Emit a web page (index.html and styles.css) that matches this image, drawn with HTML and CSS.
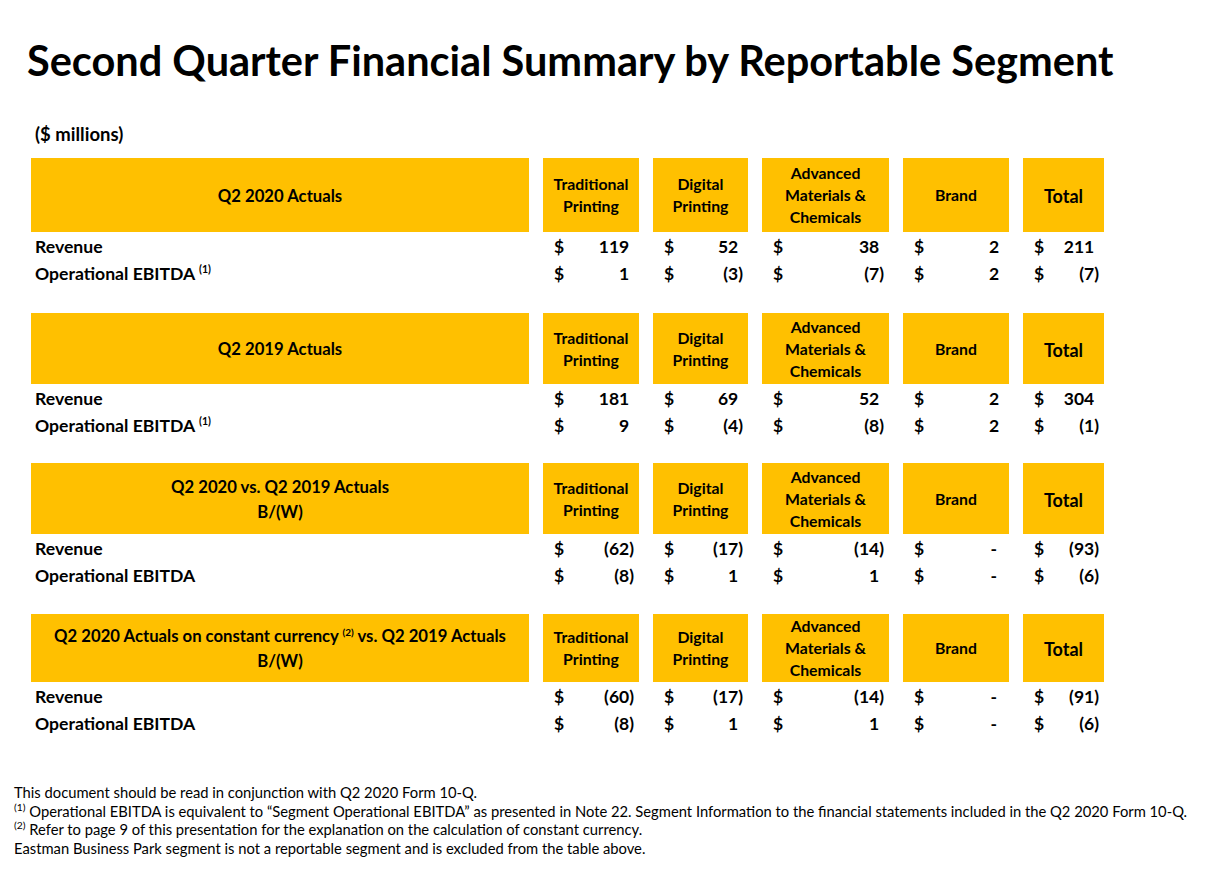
FILE: index.html
```html
<!DOCTYPE html>
<html lang="en">
<head>
<meta charset="utf-8">
<title>Second Quarter Financial Summary by Reportable Segment</title>
<link rel="stylesheet" href="styles.css">
</head>
<body>
<div class="slide">
  <h1 class="title">Second Quarter Financial Summary by Reportable Segment</h1>
  <div class="units">($ millions)</div>

  <section class="block b1">
    <div class="hd label"><span>Q2 2020 Actuals</span></div>
    <div class="hd"><span>Traditional<br>Printing</span></div>
    <div class="hd"><span>Digital<br>Printing</span></div>
    <div class="hd"><span>Advanced<br>Materials &amp;<br>Chemicals</span></div>
    <div class="hd"><span>Brand</span></div>
    <div class="hd total"><span>Total</span></div>

    <div class="rl">Revenue</div>
    <div class="val"><span>$</span><span class="pos">119</span></div>
    <div class="val"><span>$</span><span class="pos">52</span></div>
    <div class="val"><span>$</span><span class="pos">38</span></div>
    <div class="val"><span>$</span><span class="pos">2</span></div>
    <div class="val"><span>$</span><span class="pos">211</span></div>

    <div class="rl">Operational EBITDA <sup>(1)</sup></div>
    <div class="val"><span>$</span><span class="pos">1</span></div>
    <div class="val"><span>$</span><span>(3)</span></div>
    <div class="val"><span>$</span><span>(7)</span></div>
    <div class="val"><span>$</span><span class="pos">2</span></div>
    <div class="val"><span>$</span><span>(7)</span></div>
  </section>

  <section class="block b2">
    <div class="hd label"><span>Q2 2019 Actuals</span></div>
    <div class="hd"><span>Traditional<br>Printing</span></div>
    <div class="hd"><span>Digital<br>Printing</span></div>
    <div class="hd"><span>Advanced<br>Materials &amp;<br>Chemicals</span></div>
    <div class="hd"><span>Brand</span></div>
    <div class="hd total"><span>Total</span></div>

    <div class="rl">Revenue</div>
    <div class="val"><span>$</span><span class="pos">181</span></div>
    <div class="val"><span>$</span><span class="pos">69</span></div>
    <div class="val"><span>$</span><span class="pos">52</span></div>
    <div class="val"><span>$</span><span class="pos">2</span></div>
    <div class="val"><span>$</span><span class="pos">304</span></div>

    <div class="rl">Operational EBITDA <sup>(1)</sup></div>
    <div class="val"><span>$</span><span class="pos">9</span></div>
    <div class="val"><span>$</span><span>(4)</span></div>
    <div class="val"><span>$</span><span>(8)</span></div>
    <div class="val"><span>$</span><span class="pos">2</span></div>
    <div class="val"><span>$</span><span>(1)</span></div>
  </section>

  <section class="block b3">
    <div class="hd label"><span>Q2 2020 vs. Q2 2019 Actuals<br>B/(W)</span></div>
    <div class="hd"><span>Traditional<br>Printing</span></div>
    <div class="hd"><span>Digital<br>Printing</span></div>
    <div class="hd"><span>Advanced<br>Materials &amp;<br>Chemicals</span></div>
    <div class="hd"><span>Brand</span></div>
    <div class="hd total"><span>Total</span></div>

    <div class="rl">Revenue</div>
    <div class="val"><span>$</span><span>(62)</span></div>
    <div class="val"><span>$</span><span>(17)</span></div>
    <div class="val"><span>$</span><span>(14)</span></div>
    <div class="val"><span>$</span><span class="dash">-</span></div>
    <div class="val"><span>$</span><span>(93)</span></div>

    <div class="rl">Operational EBITDA</div>
    <div class="val"><span>$</span><span>(8)</span></div>
    <div class="val"><span>$</span><span class="pos">1</span></div>
    <div class="val"><span>$</span><span class="pos">1</span></div>
    <div class="val"><span>$</span><span class="dash">-</span></div>
    <div class="val"><span>$</span><span>(6)</span></div>
  </section>

  <section class="block b4">
    <div class="hd label"><span>Q2 2020 Actuals on constant currency <sup>(2)</sup> vs. Q2 2019 Actuals<br>B/(W)</span></div>
    <div class="hd"><span>Traditional<br>Printing</span></div>
    <div class="hd"><span>Digital<br>Printing</span></div>
    <div class="hd"><span>Advanced<br>Materials &amp;<br>Chemicals</span></div>
    <div class="hd"><span>Brand</span></div>
    <div class="hd total"><span>Total</span></div>

    <div class="rl">Revenue</div>
    <div class="val"><span>$</span><span>(60)</span></div>
    <div class="val"><span>$</span><span>(17)</span></div>
    <div class="val"><span>$</span><span>(14)</span></div>
    <div class="val"><span>$</span><span class="dash">-</span></div>
    <div class="val"><span>$</span><span>(91)</span></div>

    <div class="rl">Operational EBITDA</div>
    <div class="val"><span>$</span><span>(8)</span></div>
    <div class="val"><span>$</span><span class="pos">1</span></div>
    <div class="val"><span>$</span><span class="pos">1</span></div>
    <div class="val"><span>$</span><span class="dash">-</span></div>
    <div class="val"><span>$</span><span>(6)</span></div>
  </section>

  <div class="notes">
    <p>This document should be read in conjunction with Q2 2020 Form 10-Q.</p>
    <p><sup>(1)</sup> Operational EBITDA is equivalent to “Segment Operational EBITDA” as presented in Note 22. Segment Information to the financial statements included in the Q2 2020 Form 10-Q.</p>
    <p><sup>(2)</sup> Refer to page 9 of this presentation for the explanation on the calculation of constant currency.</p>
    <p>Eastman Business Park segment is not a reportable segment and is excluded from the table above.</p>
  </div>
</div>
</body>
</html>
```

FILE: styles.css
```css
html, body {
  margin: 0;
  padding: 0;
  background: #ffffff;
}

.slide {
  width: 1205px;
  height: 871px;
  overflow: hidden;
  font-family: Lato, "Liberation Sans", sans-serif;
  color: #000000;
}

.title {
  margin: 33px 0 0 27px;
  font-size: 41.5px;
  line-height: 55px;
  font-weight: 700;
  white-space: nowrap;
}

.units {
  margin: 36px 0 0 35px;
  font-size: 18.5px;
  line-height: 21px;
  font-weight: 700;
}

.block {
  display: grid;
  grid-template-columns: 498px 96px 95px 127px 106px 81px;
  column-gap: 14px;
  margin-left: 31px;
  font-weight: 700;
}

.b1 { margin-top: 13px; grid-template-rows: 74px 27px 27px; }
.b2 { margin-top: 27px; grid-template-rows: 71px 27px 27px; }
.b3 { margin-top: 25px; grid-template-rows: 71px 27px 27px; }
.b4 { margin-top: 26px; grid-template-rows: 68px 27px 27px; }

.hd {
  background: #ffc000;
  display: flex;
  align-items: center;
  justify-content: center;
  text-align: center;
  font-size: 15.8px;
  line-height: 22px;
}

.hd.label {
  font-size: 16.7px;
  line-height: 25px;
  padding-top: 2px;
}

.hd.total {
  font-size: 18px;
  padding-top: 2px;
}

.rl {
  padding-left: 4px;
  font-size: 17.6px;
  line-height: 27px;
  white-space: nowrap;
  padding-top: 1px;
}

.val {
  display: flex;
  justify-content: space-between;
  padding: 1px 5px 0 11px;
  font-size: 17.5px;
  line-height: 27px;
}

.pos::after {
  content: ")";
  visibility: hidden;
}

.dash {
  padding-right: 7px;
}

sup {
  font-size: 0.6em;
  line-height: 0;
  vertical-align: 0.65em;
}

.notes {
  margin: 47px 0 0 14px;
  font-size: 14.75px;
  line-height: 18.5px;
  font-weight: 400;
  white-space: nowrap;
}

.notes p {
  margin: 0;
}

.notes sup {
  font-size: 0.7em;
  vertical-align: 0.55em;
}
```
